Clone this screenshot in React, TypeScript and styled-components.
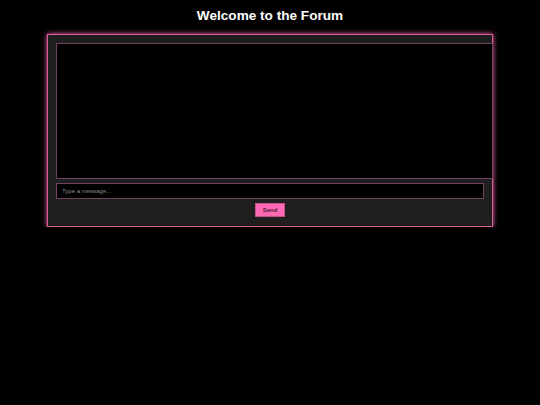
import React from "react";
import styled, { createGlobalStyle } from "styled-components";

const GlobalStyle = createGlobalStyle`
  html, body {
    margin: 0;
    padding: 0;
    background: #000;
    font-family: "Liberation Sans", Arial, sans-serif;
  }
`;

const SPage = styled.div`
  display: flex;
  flex-direction: column;
  align-items: center;
  padding-top: 8px;
`;

const STitle = styled.h1`
  margin: 0 0 10px 0;
  font-size: 13.6px;
  line-height: 16px;
  font-weight: bold;
  color: #fff;
`;

const SForum = styled.div`
  width: 446px;
  box-sizing: border-box;
  background: #1e1e1e;
  border: 1px solid #d8619c;
  box-shadow: 0 0 5px #ff69b4;
  padding: 8px;
  display: flex;
  flex-direction: column;
  align-items: flex-start;
`;

const SMessages = styled.div`
  box-sizing: content-box;
  width: 100%;
  height: 134px;
  padding: 0 3.5px;
  background: #000;
  border: 1px solid #734262;
  overflow-y: auto;
`;

const SInput = styled.input`
  box-sizing: border-box;
  width: 100%;
  height: 16px;
  margin-top: 4px;
  padding: 0 5px;
  background: #000;
  border: 1px solid #734262;
  color: #ccc;
  font-family: "Liberation Sans", Arial, sans-serif;
  font-size: 6px;
  outline: none;
  &::placeholder {
    color: #8a8a8a;
  }
`;

const SSend = styled.button`
  align-self: center;
  margin-top: 4px;
  margin-bottom: 1px;
  width: 30px;
  height: 14px;
  padding: 0;
  background: #ff69b4;
  border: 1px solid #c7508c;
  color: #4a1d36;
  font-family: "Liberation Sans", Arial, sans-serif;
  font-size: 6px;
  font-weight: bold;
  cursor: pointer;
`;

export default function App() {
  return (
    <>
      <GlobalStyle />
      <SPage>
        <STitle>Welcome to the Forum</STitle>
        <SForum>
          <SMessages />
          <SInput placeholder="Type a message..." />
          <SSend>Send</SSend>
        </SForum>
      </SPage>
    </>
  );
}
